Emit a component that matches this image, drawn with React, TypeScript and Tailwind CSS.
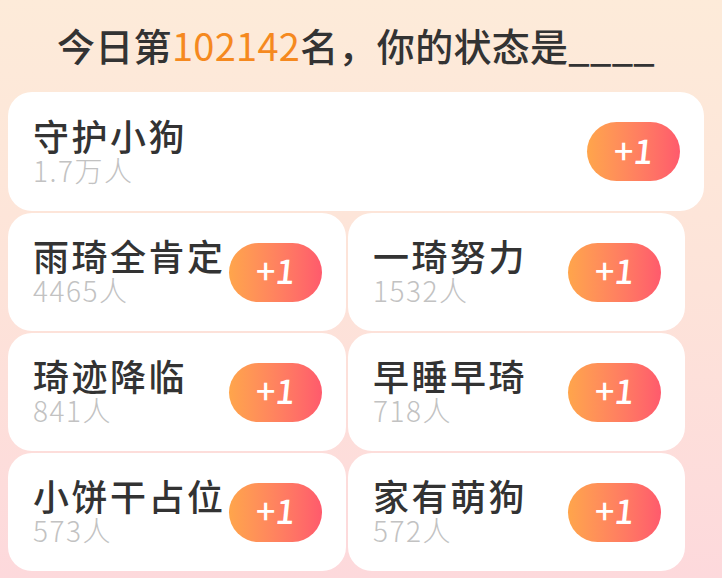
import React from 'react';

const items = [
  { title: '雨琦全肯定', count: '4465人' },
  { title: '一琦努力', count: '1532人' },
  { title: '琦迹降临', count: '841人' },
  { title: '早睡早琦', count: '718人' },
  { title: '小饼干占位', count: '573人' },
  { title: '家有萌狗', count: '572人' },
];

function PlusButton() {
  return (
    <button className="flex h-[59px] w-[93px] shrink-0 items-center justify-center rounded-full bg-gradient-to-r from-[#ffa54b] to-[#ff5a6c] text-[34px] font-medium leading-none text-white">
      <span className="-mt-1">+</span>
      <span className="-mt-1 -skew-x-6">1</span>
    </button>
  );
}

function Card({ title, count, className }: { title: string; count: string; className: string }) {
  return (
    <div className={`flex items-center justify-between rounded-[24px] bg-white pl-[25px] pr-[24px] ${className}`}>
      <div className="flex flex-col pb-[4px]">
        <span className="whitespace-nowrap text-[36px] font-medium leading-[40px] tracking-[2.5px] text-[#333333]">{title}</span>
        <span className="text-[28px] font-light leading-[30px] tracking-[1.5px] text-[#c2c2c2]">{count}</span>
      </div>
      <PlusButton />
    </div>
  );
}

export default function App() {
  return (
    <div
      className="flex h-[578px] w-[722px] flex-col overflow-hidden bg-gradient-to-b from-[#fdebd9] via-[#fde3d9] to-[#fdd9dc]"
      style={{ fontFamily: '"Noto Sans CJK SC", "Noto Sans", sans-serif' }}
    >
      <div className="flex h-[92px] items-center pb-[2px] pl-[57px]">
        <h1 className="whitespace-nowrap text-[38px] font-medium leading-none tracking-[0.3px] text-[#333333]">
          今日第<span className="font-normal text-[#f5891f]">102142</span>名，你的状态是____
        </h1>
      </div>
      <div className="flex flex-col gap-[2px] pl-[8px]">
        <Card title="守护小狗" count="1.7万人" className="h-[119px] w-[696px]" />
        <div className="grid w-[677px] grid-cols-[338px_337px] gap-[2px]">
          {items.map((item) => (
            <Card key={item.title} title={item.title} count={item.count} className="h-[118px]" />
          ))}
        </div>
      </div>
    </div>
  );
}
